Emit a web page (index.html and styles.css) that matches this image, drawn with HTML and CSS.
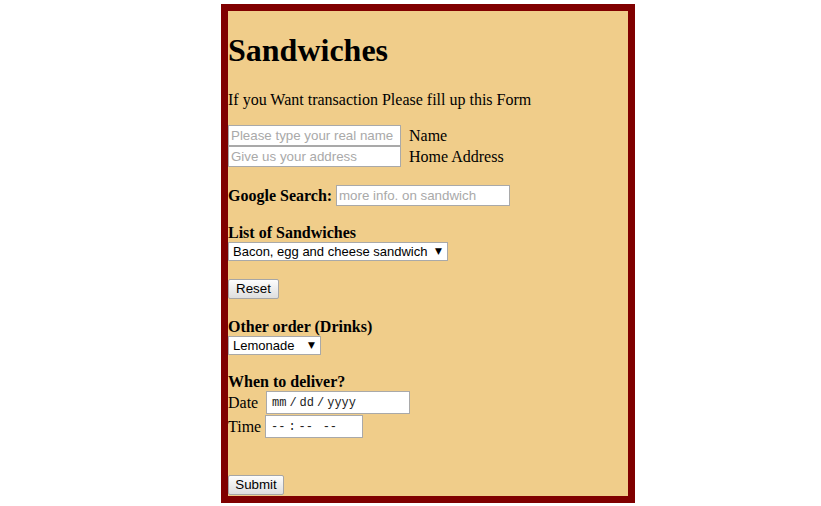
FILE: index.html
```html
<!DOCTYPE html>
<html>
<head>
<meta charset="utf-8">
<title>Sandwiches</title>
<link rel="stylesheet" href="styles.css">
</head>
<body>
<div class="card">
  <h1 class="title">Sandwiches</h1>
  <p class="intro">If you Want transaction Please fill up this Form</p>
  <form class="order">
    <div class="line"><input class="field name" type="text" placeholder="Please type your real name"><label class="side">Name</label></div>
    <div class="line"><input class="field name" type="text" placeholder="Give us your address"><label class="side">Home Address</label></div>
    <div class="line search"><b class="search-label">Google Search:</b><input class="field google" type="text" placeholder="more info. on sandwich"></div>
    <div class="heading">List of Sandwiches</div>
    <div class="select-wrap wide"><select class="pick"><option>Bacon, egg and cheese sandwich</option><option>Club sandwich</option><option>Tuna sandwich</option></select></div>
    <div class="btn-row"><button type="reset" class="btn reset">Reset</button></div>
    <div class="heading second">Other order (Drinks)</div>
    <div class="select-wrap narrow"><select class="pick"><option>Lemonade</option><option>Iced tea</option><option>Coffee</option></select></div>
    <div class="heading">When to deliver?</div>
    <div class="line tall"><span class="lbl date-lbl">Date</span><input type="date" class="field date"></div>
    <div class="line tall time-row"><span class="lbl time-lbl">Time</span><input type="time" class="field time"></div>
    <div class="btn-row submit-row"><button type="submit" class="btn submit">Submit</button></div>
  </form>
</div>
</body>
</html>
```
FILE: styles.css
```css
body {
  margin: 0;
  background: #ffffff;
  color: #000;
  font-family: "Liberation Serif", "Times New Roman", serif;
  font-size: 16px;
}

.card {
  width: 400px;
  margin: 4px 0 0 221px;
  border: 7px solid #800000;
  background: #f0cd8a;
  padding: 0 0 1px;
}

.title {
  margin: 21px 0 0;
  font-size: 32px;
  line-height: 37px;
  font-weight: bold;
}

.intro {
  margin: 22px 0 16px;
  line-height: 18px;
}

.order {
  margin: 0;
}

.line {
  display: flex;
  align-items: center;
  height: 21px;
}

.field {
  box-sizing: border-box;
  height: 21px;
  margin: 0;
  padding: 1px 2px;
  border: 1px solid #a9a9a9;
  border-radius: 0;
  background: #fff;
  color: #000;
  font-family: "Liberation Sans", Arial, sans-serif;
  font-size: 13.33px;
  outline: none;
}

.field::placeholder {
  color: #a9a9a9;
}

.name {
  width: 173px;
  flex-shrink: 0;
}

.side {
  margin-left: 8px;
}

.search {
  margin-top: 18px;
}

.search-label {
  width: 108px;
  flex-shrink: 0;
}

.google {
  width: 174px;
}

.heading {
  margin-top: 18px;
  line-height: 18px;
  font-weight: bold;
}

.heading.second {
  margin-top: 19px;
}

.select-wrap {
  position: relative;
  height: 19px;
}

.wide {
  width: 220px;
}

.narrow {
  width: 93px;
}

.pick {
  appearance: none;
  -webkit-appearance: none;
  box-sizing: border-box;
  display: block;
  width: 100%;
  height: 19px;
  margin: 0;
  padding: 0 14px 0 4px;
  border: 1px solid #a9a9a9;
  border-radius: 0;
  background: #fff;
  color: #000;
  font-family: "Liberation Sans", Arial, sans-serif;
  font-size: 13px;
  outline: none;
}

.select-wrap::after {
  content: "\25BC";
  position: absolute;
  right: 6px;
  top: 4px;
  font-family: "DejaVu Sans", sans-serif;
  font-size: 9px;
  line-height: 10px;
  color: #000;
  pointer-events: none;
}

.btn-row {
  margin-top: 18px;
  height: 20px;
}

.btn {
  box-sizing: border-box;
  height: 20px;
  margin: 0;
  padding: 0;
  border: 1px solid #a6a6a6;
  border-radius: 2px;
  background: linear-gradient(#fdfdfd, #dedede);
  color: #000;
  font-family: "Liberation Sans", Arial, sans-serif;
  font-size: 13.33px;
  line-height: 18px;
}

.reset {
  width: 51px;
}

.submit {
  width: 56px;
}

.tall {
  height: 23px;
}

.time-row {
  margin-top: 1px;
}

.lbl {
  flex-shrink: 0;
}

.date-lbl {
  width: 38px;
}

.time-lbl {
  width: 37px;
}

.date,
.time {
  height: 23px;
  padding: 1px 4px;
  font-family: "Liberation Mono", "DejaVu Sans Mono", monospace;
  font-size: 12px;
  color: #222;
}

.date {
  width: 144px;
}

.time {
  width: 98px;
}

.date::-webkit-datetime-edit-text,
.time::-webkit-datetime-edit-text {
  padding: 0 2px;
}

.date::-webkit-calendar-picker-indicator,
.time::-webkit-calendar-picker-indicator {
  display: none;
}

.date::-webkit-inner-spin-button,
.time::-webkit-inner-spin-button {
  display: none;
}

.submit-row {
  margin-top: 37px;
}
```
